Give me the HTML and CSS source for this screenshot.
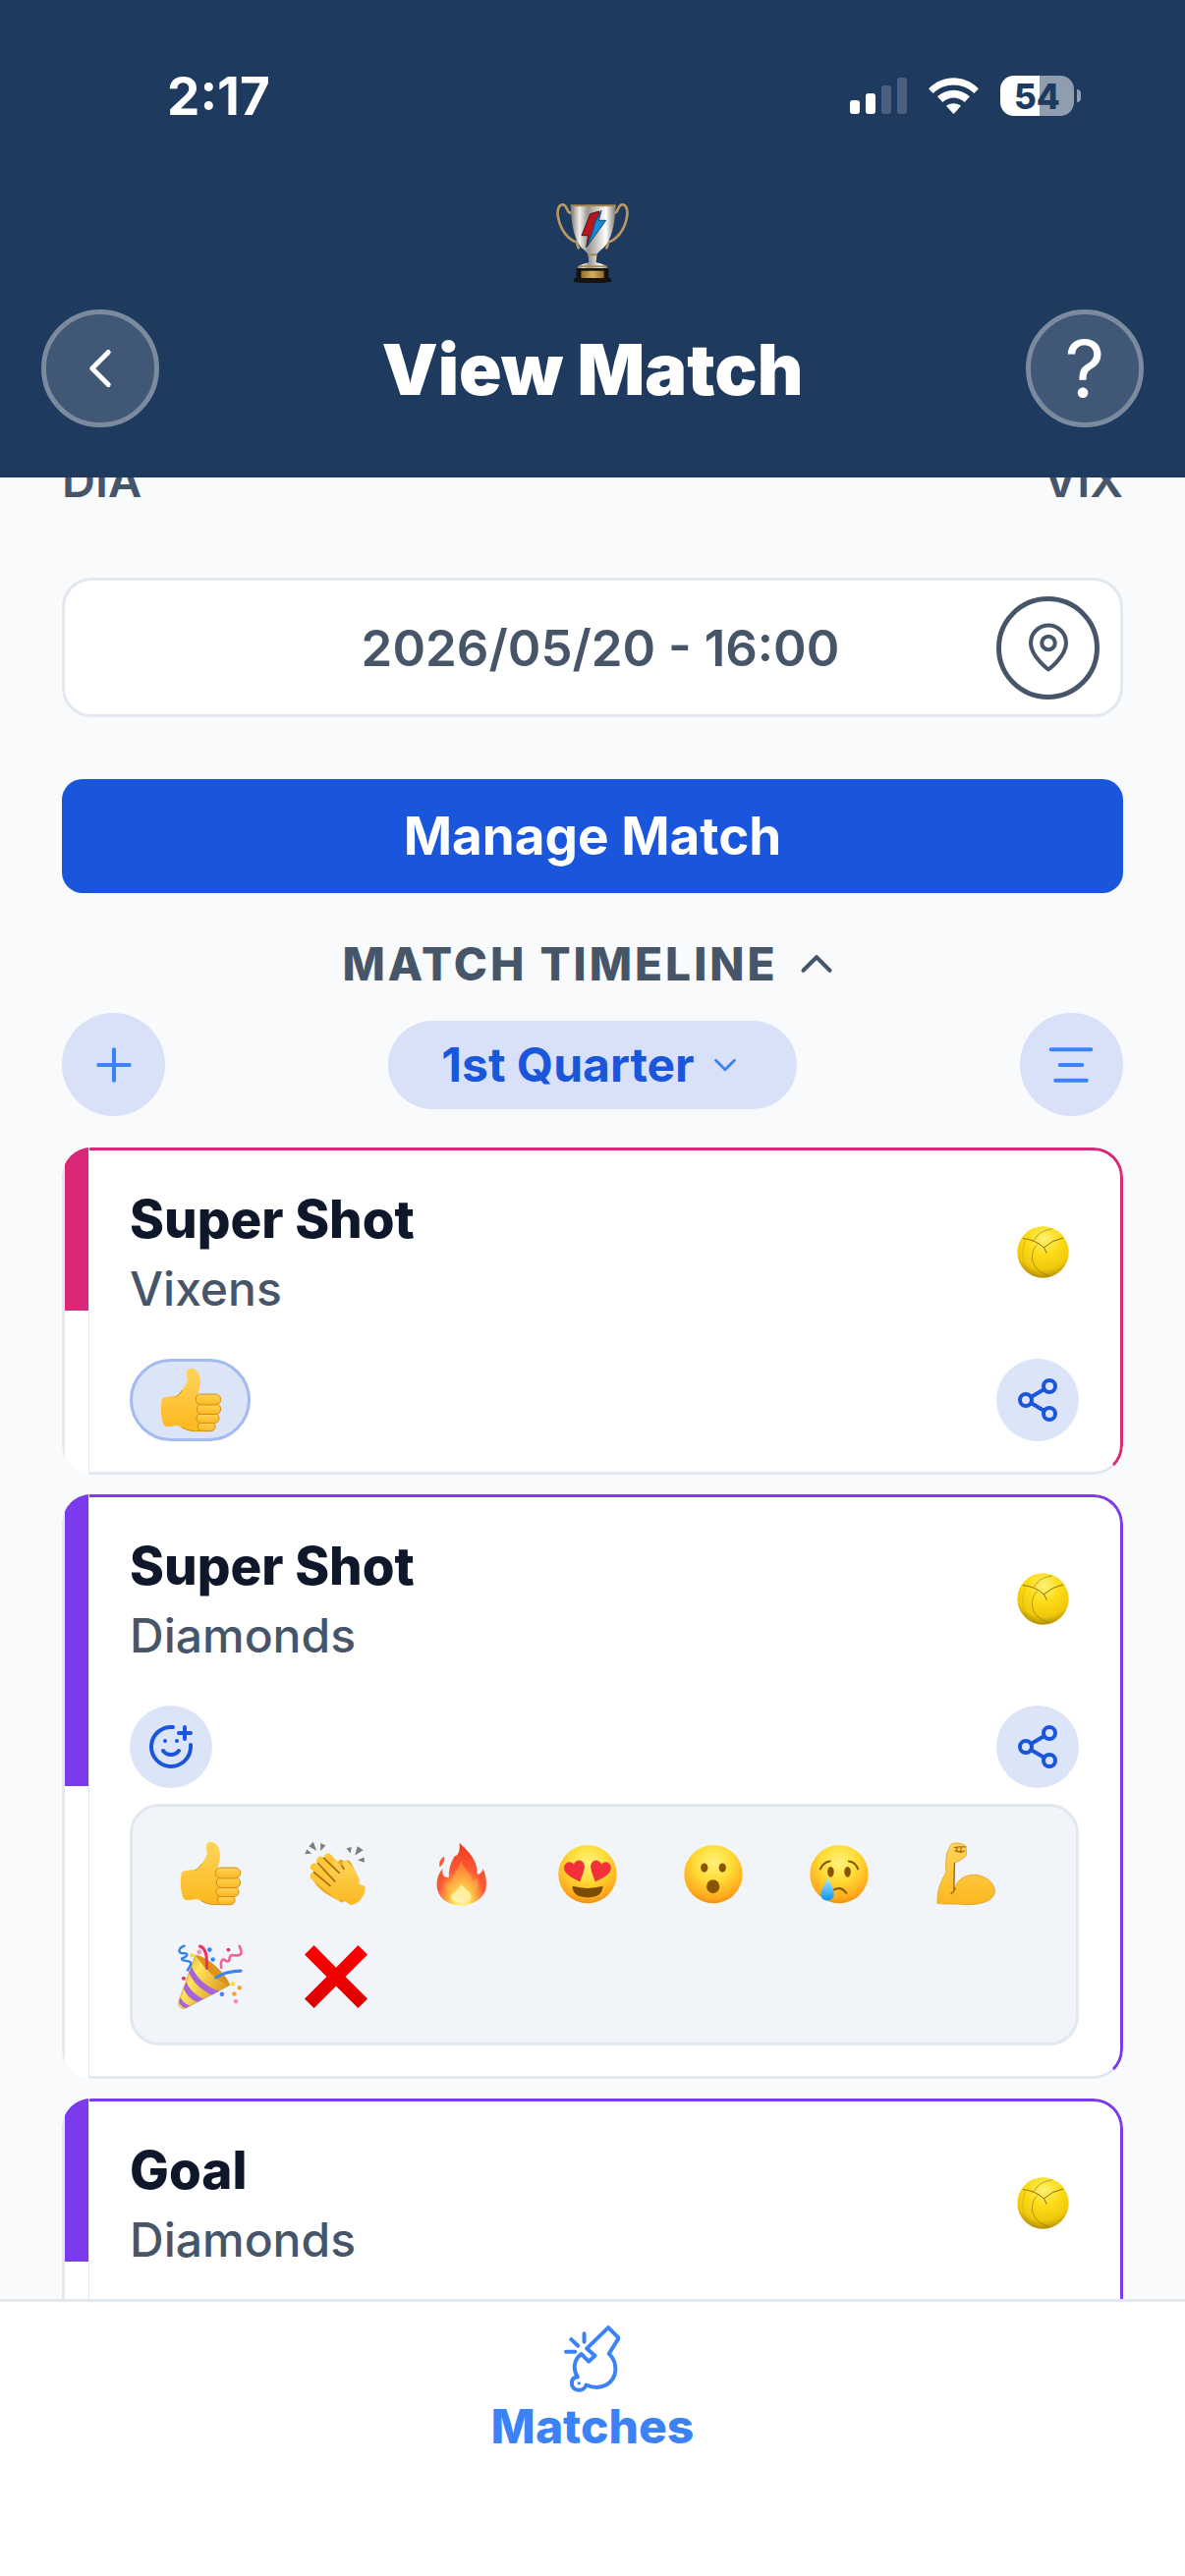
FILE: index.html
```html
<!DOCTYPE html>
<html lang="en">
<head>
    <meta charset="UTF-8">
    <meta name="viewport" content="width=device-width, initial-scale=1.0">
    <title>View Match</title>
    <link rel="stylesheet" href="styles.css">
</head>
<body>
    <!-- Shared icons -->
    <svg class="sprite" width="0" height="0" aria-hidden="true">
        <defs>
            <linearGradient id="skin" x1="0" y1="0" x2="0" y2="1">
                <stop offset="0" stop-color="#ffd45a"/>
                <stop offset="1" stop-color="#fbb81f"/>
            </linearGradient>
            <radialGradient id="face" cx="0.5" cy="0.3" r="0.72">
                <stop offset="0" stop-color="#fff27a"/>
                <stop offset="0.45" stop-color="#ffdc35"/>
                <stop offset="0.85" stop-color="#ffa81c"/>
                <stop offset="1" stop-color="#ea8a12"/>
            </radialGradient>
            <radialGradient id="flame" cx="0.5" cy="0.88" r="0.85">
                <stop offset="0" stop-color="#fffde0"/>
                <stop offset="0.2" stop-color="#ffe350"/>
                <stop offset="0.38" stop-color="#ff9a3c"/>
                <stop offset="0.55" stop-color="#fb5a35"/>
                <stop offset="1" stop-color="#f23a1c"/>
            </radialGradient>
            <linearGradient id="tear" x1="0" y1="0" x2="0" y2="1">
                <stop offset="0" stop-color="#b5e8ff"/>
                <stop offset="1" stop-color="#0a93f5"/>
            </linearGradient>
            <linearGradient id="cone" x1="0" y1="0" x2="1" y2="0.6">
                <stop offset="0" stop-color="#d99a1c"/>
                <stop offset="0.4" stop-color="#ffe45e"/>
                <stop offset="1" stop-color="#d9951b"/>
            </linearGradient>
            <linearGradient id="cross" x1="0" y1="0" x2="0" y2="1">
                <stop offset="0" stop-color="#ff0000"/>
                <stop offset="1" stop-color="#dc0000"/>
            </linearGradient>
            <radialGradient id="ball" cx="0.52" cy="0.25" r="0.78">
                <stop offset="0" stop-color="#fff07a"/>
                <stop offset="0.4" stop-color="#fddc16"/>
                <stop offset="0.75" stop-color="#efc80c"/>
                <stop offset="1" stop-color="#a98500"/>
            </radialGradient>
            <linearGradient id="silver" x1="0" y1="0" x2="1" y2="0">
                <stop offset="0" stop-color="#77736d"/>
                <stop offset="0.2" stop-color="#f2f0ec"/>
                <stop offset="0.38" stop-color="#9a9792"/>
                <stop offset="0.62" stop-color="#d5d2cd"/>
                <stop offset="0.78" stop-color="#ffffff"/>
                <stop offset="1" stop-color="#7b756c"/>
            </linearGradient>
            <linearGradient id="plate" x1="0" y1="0" x2="1" y2="0">
                <stop offset="0" stop-color="#8f6a2b"/>
                <stop offset="0.5" stop-color="#d8b063"/>
                <stop offset="1" stop-color="#8f6a2b"/>
            </linearGradient>
        </defs>

        <symbol id="thumb" viewBox="0 0 200 200">
            <path fill="url(#skin)" d="M12 96C26 86 44 92 62 84C76 66 92 50 90 32C84 14 88 2 102 2C118 2 130 18 130 46C130 62 124 72 124 82L130 194C106 198 84 192 64 180C48 178 36 184 22 181C8 172 6 116 12 96Z"/>
            <g fill="url(#skin)" stroke="#d38a12" stroke-width="3">
                <rect x="122" y="168" width="54" height="28" rx="14"/>
                <rect x="118" y="142" width="70" height="29" rx="14"/>
                <rect x="119" y="112" width="74" height="32" rx="16"/>
                <rect x="116" y="82" width="77" height="33" rx="16"/>
            </g>
            <path fill="none" stroke="#d38a12" stroke-width="3" d="M72 184C92 196 112 197 130 195M54 90C62 86 68 78 74 70"/>
        </symbol>

        <symbol id="clap" viewBox="0 0 200 200">
            <path fill="#7d7d7d" d="M4 40L10 26 25 38ZM16 16L30 2 40 30ZM52 6L68 14 52 30ZM132 22L148 18 144 38ZM158 44L166 16 184 28ZM166 58L187 50 187 66Z"/>
            <path fill="#f0a91f" d="M106 66C112 52 122 56 126 68C130 54 142 56 148 70L172 120 120 190C80 170 40 150 24 110Z"/>
            <g stroke="#ffc637" stroke-width="24" stroke-linecap="round">
                <path d="M32 108L110 170"/>
                <path d="M33 80L110 150"/>
                <path d="M52 60L120 130"/>
                <path d="M76 50L140 120"/>
            </g>
            <path fill="url(#skin)" d="M96 60L122 84C114 62 128 50 138 66C154 84 172 104 172 132L190 140C192 166 172 194 144 197C124 178 84 172 60 140Z"/>
            <path fill="none" stroke="#a96a0b" stroke-width="5" stroke-linecap="round" d="M62 52L110 98M44 68L96 124M32 96L82 138M124 86L118 76"/>
        </symbol>

        <symbol id="fire" viewBox="0 0 200 200">
            <path fill="url(#flame)" d="M93 5C112 26 148 50 148 102C158 102 166 92 164 84C174 100 178 126 174 150C170 162 166 166 160 172C150 186 120 199 98 199C66 199 44 184 34 170C14 140 24 104 41 84C38 102 42 112 60 112C60 82 66 66 78 46C92 44 94 24 93 5Z"/>
            <path fill="#ffb443" opacity=".5" d="M98 60C100 84 132 96 130 124C140 126 146 118 148 112C154 150 140 180 98 184C62 182 46 156 52 128C60 136 70 134 72 124C72 96 94 84 98 60Z"/>
            <path fill="#fff6b0" opacity=".8" d="M98 132C110 152 134 156 128 176C120 192 76 192 66 178C62 162 88 156 98 132Z"/>
            <path fill="#fb5a35" d="M46 48C48 62 42 72 32 80C28 66 34 54 46 48Z"/>
        </symbol>

        <symbol id="love" viewBox="0 0 200 200">
            <circle cx="100" cy="102" r="90" fill="url(#face)"/>
            <path fill="#f4303c" stroke="#d81f2c" stroke-width="2" d="M76 124C54 112 26 102 29 79C33 62 51 62 58 74C62 54 90 56 89 79C88 98 80 108 76 124Z"/>
            <path fill="#f4303c" stroke="#d81f2c" stroke-width="2" d="M124 124C146 112 174 102 171 79C167 62 149 62 142 74C138 54 110 56 111 79C112 98 120 108 124 124Z"/>
            <path fill="#7c4b00" d="M53 139Q100 152 147 139Q146 174 100 174Q54 174 53 139Z"/>
        </symbol>

        <symbol id="wow" viewBox="0 0 200 200">
            <circle cx="100" cy="102" r="90" fill="url(#face)"/>
            <g fill="#875400">
                <ellipse cx="72" cy="82" rx="11" ry="14"/>
                <ellipse cx="128" cy="82" rx="11" ry="14"/>
                <ellipse cx="99" cy="140" rx="20" ry="21"/>
            </g>
        </symbol>

        <symbol id="sad" viewBox="0 0 200 200">
            <circle cx="100" cy="102" r="90" fill="url(#face)"/>
            <g fill="#875400">
                <ellipse cx="74" cy="95" rx="10" ry="16"/>
                <ellipse cx="126" cy="95" rx="10" ry="16"/>
            </g>
            <path fill="none" stroke="#875400" stroke-width="6" stroke-linecap="round" d="M42 86Q52 64 72 62M130 62Q150 64 158 86M84 150Q106 138 122 160"/>
            <path fill="url(#tear)" d="M64 112C74 130 84 148 84 164C84 178 74 183 63 183C50 183 42 174 44 160C46 142 60 130 64 112Z"/>
        </symbol>

        <symbol id="muscle" viewBox="0 0 200 200">
            <path fill="url(#skin)" stroke="#d8921a" stroke-width="2" d="M15 192C14 150 26 124 42 96C40 76 42 58 44 38L56 12C64 2 88 4 104 16L104 44C96 54 80 62 68 68L66 150C78 112 108 102 136 104C172 110 194 134 192 158C186 186 150 196 100 196C60 192 36 196 15 192Z"/>
            <path fill="none" stroke="#a9690a" stroke-width="4" stroke-linecap="round" d="M68 20L82 18 100 18M70 30L88 34 98 30M76 20L74 32M88 22L86 32M68 68L66 148M58 162C66 158 68 152 70 146"/>
        </symbol>

        <symbol id="party" viewBox="0 0 200 200">
            <path fill="url(#cone)" stroke="#c88918" stroke-width="2" d="M54 34L3 176C0 192 10 200 24 197L160 126C150 96 94 38 54 34Z"/>
            <path fill="#a565d8" d="M42 68C58 106 94 136 128 144L106 156C76 144 46 118 34 86ZM26 116C36 142 64 164 80 168L60 178C40 172 26 154 18 136ZM8 164C16 180 28 188 38 189L24 197C14 194 6 186 3 178Z"/>
            <path fill="#dd9418" d="M54 34C72 60 120 118 160 126C150 96 94 38 54 34Z"/>
            <g fill="none" stroke-linecap="round">
                <path stroke="#2f7ff0" stroke-width="7" d="M20 5C0 12 0 28 16 28C36 26 30 38 12 44C10 56 44 46 40 62L30 80"/>
                <path stroke="#ee2f62" stroke-width="9" d="M68 6C90 14 90 44 89 74"/>
                <path stroke="#f0628f" stroke-width="8" d="M134 72C130 50 138 42 150 52C166 58 152 30 172 34C202 38 198 22 190 6"/>
                <path stroke="#3d86f2" stroke-width="10" d="M118 102Q150 82 194 82"/>
            </g>
            <g fill="#3d86f2"><circle cx="98" cy="17" r="7"/><circle cx="108" cy="47" r="7"/><circle cx="136" cy="154" r="7"/></g>
            <g fill="#fbd93a"><circle cx="44" cy="34" r="7"/><circle cx="169" cy="122" r="7"/></g>
            <g fill="#f3a13a"><circle cx="190" cy="134" r="7"/><circle cx="174" cy="153" r="7"/></g>
            <g fill="#f48fbf"><circle cx="66" cy="24" r="7"/><circle cx="179" cy="176" r="7"/></g>
            <g fill="#e0345f"><circle cx="18" cy="105" r="6"/><circle cx="156" cy="17" r="6"/></g>
        </symbol>

        <symbol id="remove" viewBox="0 0 200 200">
            <path fill="url(#cross)" d="M32 3L100 72 168 3 197 32 129 100 197 168 168 197 100 129 32 197 3 168 71 100 3 32Z"/>
        </symbol>

        <symbol id="netball" viewBox="0 0 160 160">
            <circle cx="80" cy="80" r="79" fill="url(#ball)"/>
            <g fill="none" stroke="#8a6d00" stroke-width="3">
                <path d="M18 38Q58 42 82 66Q110 42 142 36M82 64L92 84"/>
                <path opacity=".6" d="M52 44Q66 14 108 9M62 56C38 80 36 134 98 152"/>
                <path opacity=".2" d="M26 46C12 76 16 110 32 134"/>
            </g>
        </symbol>

        <symbol id="share" viewBox="0 0 24 24">
            <circle cx="18" cy="5" r="3"/>
            <circle cx="6" cy="12" r="3"/>
            <circle cx="18" cy="19" r="3"/>
            <path d="M8.59 13.51l6.83 3.98M15.41 6.51l-6.82 3.98"/>
        </symbol>
    </svg>

    <div class="app">
        <header class="header">
            <div class="status-bar">
                <span class="time">2:17</span>
                <div class="status-icons">
                    <svg class="signal" width="58" height="37" viewBox="0 0 58 37" fill="#fff">
                        <rect x="0" y="23" width="10" height="14" rx="3"/>
                        <rect x="16" y="16" width="10" height="21" rx="3"/>
                        <rect x="32" y="8" width="10" height="29" rx="3" opacity=".2"/>
                        <rect x="48" y="0" width="10" height="37" rx="3" opacity=".2"/>
                    </svg>
                    <svg class="wifi" width="51" height="37" viewBox="0 0 153 111" fill="#fff">
                        <path d="M2 32C44-10 109-10 151 32Q153 34 151 36L139 48C103 14 50 14 14 48L2 36Q0 34 2 32Z"/>
                        <path d="M27 58C55 32 98 32 126 58L110 75C90 57 63 57 43 75Z"/>
                        <path d="M54 86C66 76 87 76 99 86L79 109Q76 112 74 109Z"/>
                    </svg>
                    <div class="battery"><span class="battery-level">54</span></div>
                </div>
            </div>

            <svg class="trophy" width="74" height="81" viewBox="0 0 222 243" aria-label="Trophy">
                <g fill="none" stroke="#b7995f" stroke-width="8" stroke-linecap="round">
                    <path d="M46 28C34 34 34 6 22 4C8 2 2 20 6 42C14 86 40 112 62 118L68 136"/>
                    <path d="M176 28C188 34 188 6 200 4C214 2 220 20 216 42C208 86 182 112 160 118L154 136"/>
                </g>
                <path fill="url(#silver)" d="M44 6H182C180 66 168 112 146 134C132 146 124 154 122 160H98C96 150 88 144 76 134C56 110 46 66 44 6Z"/>
                <path fill="none" stroke="#a98a50" stroke-width="6" d="M44 7H182"/>
                <path fill="#b51620" stroke="#4d1418" stroke-width="3" d="M104 32L132 24 118 78 92 134 98 98 78 98Z"/>
                <path fill="#168ad6" stroke="#15466e" stroke-width="3" d="M138 22L130 52 152 52 94 132 112 84 118 60Z"/>
                <path fill="url(#silver)" d="M98 158H124L122 180C136 184 158 188 158 200H64C64 188 88 184 100 180Z"/>
                <path fill="#a98a50" d="M97 154H125V160H97ZM68 190H154V196H68Z"/>
                <path fill="#15120f" d="M62 198H160V226L168 230V240Q112 248 54 240V230L62 226Z"/>
                <rect x="76" y="206" width="70" height="22" fill="url(#plate)"/>
            </svg>

            <div class="title-row">
                <button class="round-btn" aria-label="Back">
                    <svg class="line-icon" width="66" height="66" viewBox="0 0 24 24"><path d="M15 18l-6-6 6-6"/></svg>
                </button>
                <h1>View Match</h1>
                <button class="round-btn help-btn" aria-label="Help">?</button>
            </div>
        </header>

        <main class="content">
            <div class="teams">
                <span>DIA</span>
                <span>VIX</span>
            </div>

            <div class="date-box">
                <time datetime="2026-05-20T16:00">2026/05/20 - 16:00</time>
                <button class="pin-btn" aria-label="Show location">
                    <svg class="line-icon" width="54" height="54" viewBox="0 0 24 24">
                        <path d="M20 10c0 6-8 12-8 12s-8-6-8-12a8 8 0 0 1 16 0z"/>
                        <circle cx="12" cy="10" r="3"/>
                    </svg>
                </button>
            </div>

            <button class="manage-btn">Manage Match</button>

            <button class="timeline-toggle" aria-expanded="true">
                MATCH TIMELINE
                <svg class="line-icon" width="54" height="54" viewBox="0 0 24 24"><path d="M18 15l-6-6-6 6"/></svg>
            </button>

            <div class="toolbar">
                <button class="tool-btn" aria-label="Add event">
                    <svg class="line-icon" width="54" height="54" viewBox="0 0 24 24"><path d="M12 5v14M5 12h14"/></svg>
                </button>
                <button class="quarter-btn">
                    1st Quarter
                    <svg class="line-icon" width="38" height="38" viewBox="0 0 24 24"><path d="M6 9l6 6 6-6"/></svg>
                </button>
                <button class="tool-btn" aria-label="Timeline view">
                    <svg class="line-icon" width="54" height="54" viewBox="0 0 24 24"><path d="M3 5h18M7 12h10M5 19h14"/></svg>
                </button>
            </div>

            <div class="events">
                <article class="event vixens">
                    <div class="event-top">
                        <div>
                            <h2>Super Shot</h2>
                            <p>Vixens</p>
                        </div>
                        <svg class="ball" width="53" height="53"><use href="#netball"/></svg>
                    </div>
                    <div class="event-actions">
                        <button class="reaction" aria-label="Thumbs up">
                            <svg width="66" height="66"><use href="#thumb"/></svg>
                        </button>
                        <button class="action-btn" aria-label="Share">
                            <svg class="line-icon" width="48" height="48"><use href="#share"/></svg>
                        </button>
                    </div>
                </article>

                <article class="event diamonds">
                    <div class="event-top">
                        <div>
                            <h2>Super Shot</h2>
                            <p>Diamonds</p>
                        </div>
                        <svg class="ball" width="53" height="53"><use href="#netball"/></svg>
                    </div>
                    <div class="event-actions">
                        <button class="action-btn" aria-label="Add reaction">
                            <svg class="line-icon" width="48" height="48" viewBox="0 0 24 24">
                                <path d="M22 11v1a10 10 0 1 1-9-10"/>
                                <path d="M8 14s1.5 2 4 2 4-2 4-2M9 9h.01M15 9h.01M16 5h6M19 2v6"/>
                            </svg>
                        </button>
                        <button class="action-btn" aria-label="Share">
                            <svg class="line-icon" width="48" height="48"><use href="#share"/></svg>
                        </button>
                    </div>
                    <div class="picker">
                        <button aria-label="Thumbs up"><svg width="66" height="66"><use href="#thumb"/></svg></button>
                        <button aria-label="Clap"><svg width="66" height="66"><use href="#clap"/></svg></button>
                        <button aria-label="Fire"><svg width="66" height="66"><use href="#fire"/></svg></button>
                        <button aria-label="Love"><svg width="66" height="66"><use href="#love"/></svg></button>
                        <button aria-label="Wow"><svg width="66" height="66"><use href="#wow"/></svg></button>
                        <button aria-label="Sad"><svg width="66" height="66"><use href="#sad"/></svg></button>
                        <button aria-label="Strong"><svg width="66" height="66"><use href="#muscle"/></svg></button>
                        <button aria-label="Party"><svg width="66" height="66"><use href="#party"/></svg></button>
                        <button aria-label="Remove"><svg width="66" height="66"><use href="#remove"/></svg></button>
                    </div>
                </article>

                <article class="event diamonds">
                    <div class="event-top">
                        <div>
                            <h2>Goal</h2>
                            <p>Diamonds</p>
                        </div>
                        <svg class="ball" width="53" height="53"><use href="#netball"/></svg>
                    </div>
                    <div class="event-actions">
                        <button class="action-btn" aria-label="Share">
                            <svg class="line-icon" width="48" height="48"><use href="#share"/></svg>
                        </button>
                    </div>
                </article>
            </div>
        </main>

        <nav class="bottom-nav">
            <a href="#matches">
                <svg width="57" height="68" viewBox="0 0 172 204" fill="none" stroke="#3b82f6" stroke-width="12" stroke-linecap="round" stroke-linejoin="round">
                    <path d="M70 70L136 6 168 38 138 86C166 114 166 160 130 182C104 195 82 188 68 182C62 206 22 202 24 176C24 162 32 158 42 158C26 134 30 104 53 87L76 110 95 92Z"/>
                    <path d="M6 80H34M22 42L43 62M62 24V50"/>
                    <circle cx="46" cy="177" r="5" fill="#3b82f6" stroke="none"/>
                </svg>
                <span>Matches</span>
            </a>
        </nav>
    </div>
</body>
</html>
```
FILE: styles.css
```css
* {
    margin: 0;
    padding: 0;
    box-sizing: border-box;
}

body {
    background: #f8fafc;
    font-family: 'Inter', 'Liberation Sans', sans-serif;
    color: #475569;
}

button {
    border: none;
    background: none;
    font-family: inherit;
    color: inherit;
    cursor: pointer;
    display: flex;
    align-items: center;
    justify-content: center;
}

svg {
    display: block;
    flex-shrink: 0;
}

.sprite {
    position: absolute;
}

.line-icon {
    fill: none;
    stroke: currentColor;
    stroke-width: 1.8;
    stroke-linecap: round;
    stroke-linejoin: round;
}

.app {
    height: 100vh;
    display: flex;
    flex-direction: column;
    overflow: hidden;
}

/* Header */
.header {
    position: relative;
    z-index: 2;
    flex-shrink: 0;
    background: #1e3a5f;
    color: #fff;
    padding: 0 42px 51px;
    display: flex;
    flex-direction: column;
    align-items: center;
}

.status-bar {
    align-self: stretch;
    height: 195px;
    padding: 0 64px 0 128px;
    display: flex;
    align-items: center;
    justify-content: space-between;
}

.time {
    font-size: 53px;
    font-weight: 700;
}

.status-icons {
    display: flex;
    align-items: center;
    gap: 22px;
}

.battery {
    position: relative;
    width: 75px;
    height: 41px;
    margin-right: 7px;
    border-radius: 14px;
    background: linear-gradient(to right, #fff 54%, #8f9daf 54%);
    display: flex;
    align-items: center;
    justify-content: center;
}

/* Battery cap */
.battery::after {
    content: '';
    position: absolute;
    right: -7px;
    width: 4px;
    height: 13px;
    border-radius: 0 6px 6px 0;
    background: #8f9daf;
}

.battery-level {
    font-size: 35px;
    font-weight: 800;
    color: #1e3a5f;
}

.trophy {
    margin-top: 12px;
}

.title-row {
    align-self: stretch;
    margin-top: 27px;
    display: flex;
    align-items: center;
    justify-content: space-between;
}

h1 {
    font-size: 72px;
    font-weight: 900;
}

.round-btn {
    width: 120px;
    height: 120px;
    border-radius: 50%;
    border: 5px solid #7b8a9f;
    background: #405775;
    color: #fff;
}

.help-btn {
    font-size: 80px;
    line-height: 80px;
    font-weight: 400;
}

/* Content, scrolled a little under the header */
.content {
    flex: 1;
    min-height: 0;
    margin-top: -25px;
    padding: 0 63px;
    overflow: hidden;
}

.teams {
    display: flex;
    justify-content: space-between;
    font-size: 47px;
    line-height: 56px;
    font-weight: 600;
}

.date-box {
    position: relative;
    margin-top: 71px;
    height: 142px;
    border: 3px solid #e2e8f0;
    border-radius: 30px;
    background: #fff;
    padding-left: 16px;
    display: flex;
    align-items: center;
    justify-content: center;
    font-size: 51px;
    font-weight: 600;
}

.pin-btn {
    position: absolute;
    right: 21px;
    width: 105px;
    height: 105px;
    border: 5px solid #475569;
    border-radius: 50%;
}

.manage-btn {
    width: 100%;
    height: 116px;
    margin-top: 63px;
    border-radius: 21px;
    background: #1a56db;
    color: #fff;
    font-size: 53px;
    font-weight: 700;
}

.timeline-toggle {
    margin: 42px auto 0;
    height: 60px;
    gap: 12px;
    font-size: 46px;
    font-weight: 800;
    letter-spacing: 3px;
}

.toolbar {
    margin-top: 20px;
    display: flex;
    align-items: center;
    justify-content: space-between;
}

.tool-btn {
    width: 105px;
    height: 105px;
    border-radius: 50%;
    background: #d8e1f8;
    color: #3b82f6;
}

.quarter-btn {
    height: 90px;
    padding: 0 54px;
    gap: 12px;
    border-radius: 45px;
    background: #d8e1f8;
    color: #1a56db;
    font-size: 48px;
    font-weight: 700;
}

.quarter-btn svg {
    color: #3b82f6;
}

/* Timeline events */
.events {
    margin-top: 32px;
    display: flex;
    flex-direction: column;
    gap: 20px;
}

.event {
    position: relative;
    padding: 43px 42px 31px 66px;
    background: #fff;
    border: 3px solid #e2e8f0;
    border-top-color: var(--team);
    border-right-color: var(--team);
    border-radius: 30px;
    clip-path: inset(0 round 30px);
}

.vixens {
    --team: #db2777;
}

.diamonds {
    --team: #7c3aed;
}

.event::before {
    content: '';
    position: absolute;
    top: -3px;
    bottom: -3px;
    left: 0;
    width: 24px;
    border-right: 1px solid #e2e8f0;
    background: linear-gradient(to bottom, var(--team) 50%, #fff 50%);
    background-clip: padding-box;
}

.event-top {
    display: flex;
    align-items: flex-start;
    justify-content: space-between;
}

.event h2 {
    font-size: 53px;
    line-height: 54px;
    font-weight: 800;
    color: #0f172a;
}

.event p {
    margin-top: 14px;
    font-size: 48px;
    line-height: 60px;
    font-weight: 500;
}

.ball {
    margin: 34px 10px 0 0;
}

.event-actions {
    margin-top: 41px;
    display: flex;
    justify-content: space-between;
}

.action-btn {
    width: 84px;
    height: 84px;
    border-radius: 50%;
    background: #dce5f8;
    color: #1a56db;
}

.action-btn .line-icon {
    stroke-width: 2;
}

.reaction {
    width: 123px;
    height: 84px;
    border: 3px solid #a3bbf0;
    border-radius: 42px;
    background: #dce5f8;
}

.picker {
    margin-top: 16px;
    padding: 23px;
    border: 3px solid #e2e8f0;
    border-radius: 30px;
    background: #f1f5f9;
    display: flex;
    flex-wrap: wrap;
    gap: 16px;
}

.picker button {
    width: 112px;
    height: 89px;
}

/* Bottom navigation */
.bottom-nav {
    position: relative;
    z-index: 2;
    flex-shrink: 0;
    background: #fff;
    border-top: 3px solid #e2e8f0;
    padding: 24px 0 122px;
    display: flex;
    justify-content: center;
}

.bottom-nav a {
    display: flex;
    flex-direction: column;
    align-items: center;
    gap: 5px;
    color: #3b82f6;
    font-size: 48px;
    line-height: 60px;
    font-weight: 800;
    text-decoration: none;
}
```
